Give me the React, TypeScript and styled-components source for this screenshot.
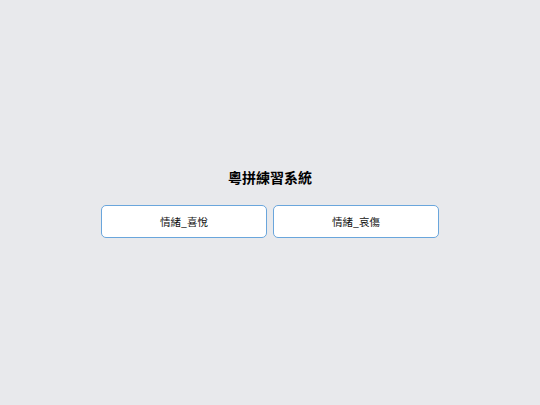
import styled, { createGlobalStyle } from 'styled-components';

const GlobalStyle = createGlobalStyle`
    html, body {
        margin: 0;
        padding: 0;
        background: #e8e9ec;
    }
    body {
        font-family: 'Noto Sans', 'Noto Sans CJK TC', sans-serif;
    }
`;

const categories = ['情緒_喜悅', '情緒_哀傷'];

const App = () => {
    return (
        <>
            <GlobalStyle />
            <Page>
                <Title>粵拼練習系統</Title>
                <ButtonGrid>
                    {categories.map((name) => (
                        <CategoryButton key={name}>{name}</CategoryButton>
                    ))}
                </ButtonGrid>
            </Page>
        </>
    );
};

const Page = styled.main`
    min-height: 100vh;
    display: flex;
    flex-direction: column;
    align-items: center;
    justify-content: center;
    box-sizing: border-box;
    padding-bottom: 1px;
`;

const Title = styled.h1`
    margin: 0 0 18px;
    font-family: 'Noto Sans CJK TC', sans-serif;
    font-size: 14px;
    font-weight: 700;
    line-height: 20px;
    color: #000;
`;

const ButtonGrid = styled.div`
    display: grid;
    grid-template-columns: repeat(2, 166px);
    gap: 6px;
`;

const CategoryButton = styled.button`
    height: 33px;
    background: #ffffff;
    border: 1px solid #6aa6dc;
    border-radius: 5px;
    font-family: 'Noto Sans CJK TC', sans-serif;
    font-size: 10.5px;
    color: #111;
    cursor: pointer;
    padding: 0;
`;

export default App;
